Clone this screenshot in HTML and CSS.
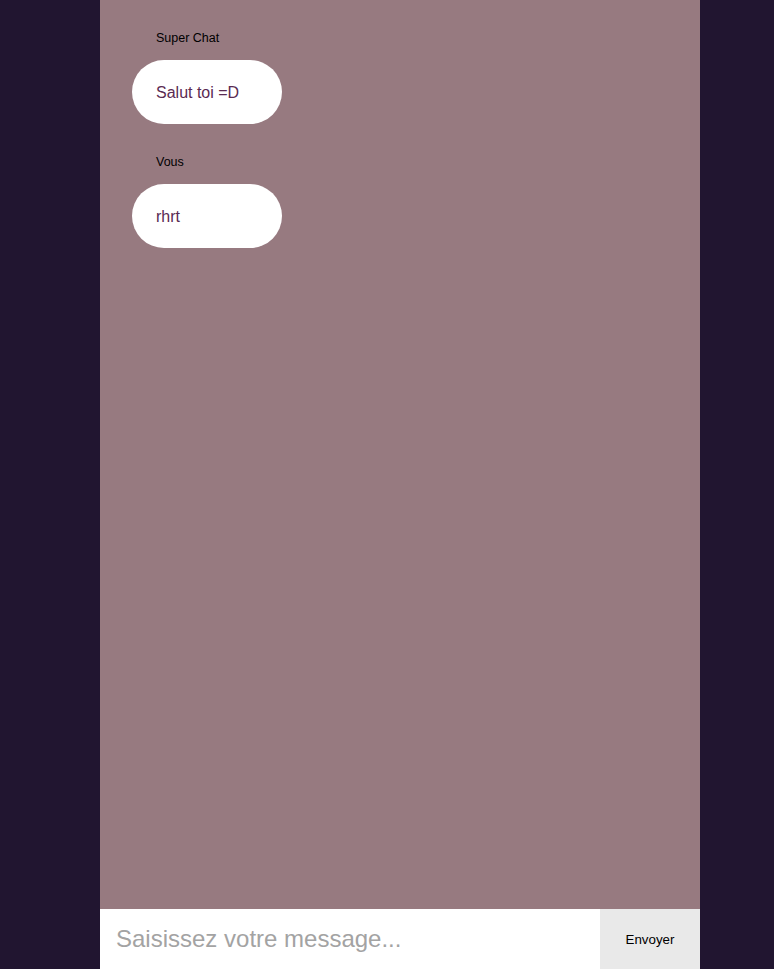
FILE: index.html
```html
<!DOCTYPE html>
<html lang="fr">
<head>
<meta charset="utf-8">
<title>Super Chat</title>
<link rel="stylesheet" href="styles.css">
</head>
<body>
<div class="app">
  <div class="messages">
    <div class="message">
      <div class="author">Super Chat</div>
      <div class="bubble">Salut toi =D</div>
    </div>
    <div class="message">
      <div class="author">Vous</div>
      <div class="bubble">rhrt</div>
    </div>
  </div>
  <form class="composer">
    <input class="input" type="text" placeholder="Saisissez votre message...">
    <button class="send" type="button">Envoyer</button>
  </form>
</div>
</body>
</html>
```
FILE: styles.css
```css
html, body {
  margin: 0;
  height: 100%;
}
body {
  background: #211530;
  font-family: "Liberation Sans", Arial, sans-serif;
}
.app {
  width: 600px;
  height: 100%;
  margin-left: 100px;
  display: flex;
  flex-direction: column;
  background: #977a80;
}
.messages {
  flex: 1;
  padding: 31px 0 0 32px;
}
.message {
  margin-bottom: 31px;
}
.author {
  font-size: 12.5px;
  line-height: 15px;
  color: #000;
  margin: 0 0 14px 24px;
}
.bubble {
  width: 150px;
  height: 64px;
  box-sizing: border-box;
  padding: 1px 24px 0;
  border-radius: 32px;
  background: #fff;
  color: #5a2a52;
  font-size: 16px;
  display: flex;
  align-items: center;
}
.composer {
  display: flex;
  height: 60px;
  margin: 0;
}
.input {
  width: 500px;
  border: none;
  outline: none;
  margin: 0;
  padding: 0 16px;
  box-sizing: border-box;
  font-family: "Liberation Sans", Arial, sans-serif;
  font-size: 24px;
  background: #fff;
}
.input::placeholder {
  color: #a3a3a3;
}
.send {
  width: 100px;
  border: none;
  margin: 0;
  padding: 0;
  background: #e9e9e9;
  color: #000;
  font-family: "Liberation Sans", Arial, sans-serif;
  font-size: 13.33px;
}
```
